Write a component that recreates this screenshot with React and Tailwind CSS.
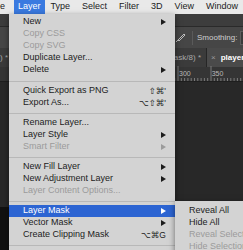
import React from "react";

const font = { fontFamily: '"Liberation Sans", "DejaVu Sans", sans-serif' };

const items = [
  { label: "New", arrow: true },
  { label: "Copy CSS", disabled: true },
  { label: "Copy SVG", disabled: true },
  { label: "Duplicate Layer..." },
  { label: "Delete", arrow: true },
  "sep-first",
  { label: "Quick Export as PNG", shortcut: "⇧⌘'" },
  { label: "Export As...", shortcut: "⌥⇧⌘'" },
  "sep",
  { label: "Rename Layer..." },
  { label: "Layer Style", arrow: true },
  { label: "Smart Filter", arrow: true, disabled: true },
  "sep",
  { label: "New Fill Layer", arrow: true },
  { label: "New Adjustment Layer", arrow: true },
  { label: "Layer Content Options...", disabled: true },
  "sep",
  { label: "Layer Mask", arrow: true, active: true },
  { label: "Vector Mask", arrow: true },
  { label: "Create Clipping Mask", shortcut: "⌥⌘G" },
  "sep",
  { label: "Smart Objects", arrow: true },
  { label: "Video Layers", arrow: true },
];

const subItems = [
  { label: "Reveal All" },
  { label: "Hide All" },
  { label: "Reveal Selection", disabled: true },
  { label: "Hide Selection", disabled: true },
];

const Arrow = () => (
  <svg width="5" height="6" viewBox="0 0 5 6">
    <polygon points="0,0 5,3 0,6" fill="currentColor" />
  </svg>
);

const MenuRow = ({ item }) => {
  let color = "text-[#1c1c1c]";
  if (item.disabled) color = "text-[#9b9b9b]";
  if (item.active) color = "text-white bg-[#2c64d2]";
  return (
    <div className={`flex h-3 items-center justify-between pl-[14px] pr-[9px] ${color}`}>
      <span className="whitespace-nowrap">{item.label}</span>
      {item.arrow && <Arrow />}
      {item.shortcut && <span className="whitespace-nowrap text-[8.5px]">{item.shortcut}</span>}
    </div>
  );
};

const Separator = ({ first }) => (
  <div className={first ? "pt-[5px] pb-[3px]" : "pt-1 pb-[3px]"}>
    <div className="h-px bg-[#b8b8b8]" />
  </div>
);

export default function App() {
  return (
    <div className="relative flex h-[250px] w-[243px] flex-col overflow-hidden bg-[#282828]" style={font}>
      {/* macOS menu bar */}
      <div className="flex h-[14px] items-center bg-[#e9e9e9] text-[9px] text-[#222]">
        <div className="flex w-[14px] shrink-0 justify-end overflow-hidden">
          <span className="whitespace-nowrap pr-[9px]">Image</span>
        </div>
        <span className="flex h-full items-center bg-[#3a7ae0] px-[4px] text-white">Layer</span>
        <span className="px-[6px]">Type</span>
        <span className="px-[6px]">Select</span>
        <span className="px-[6px]">Filter</span>
        <span className="px-[6px]">3D</span>
        <span className="px-[6px]">View</span>
        <span className="px-[6px]">Window</span>
      </div>

      {/* app title strip */}
      <div className="h-[13px] border-b border-[#2a2a2a] bg-[#3d3d3d]" />

      {/* options bar */}
      <div className="flex h-[21px] items-center bg-[#464646] pl-[175px] text-[8px] text-[#cfcfcf]">
        <svg width="11" height="10" viewBox="0 0 11 10" className="mr-[6px] shrink-0">
          <path d="M1 9 L4 6 M3 7 L9 1 L10 2 L4 8 Z" stroke="#bdbdbd" strokeWidth="1" fill="none" />
        </svg>
        <div className="mr-[4px] h-[14px] w-px shrink-0 bg-[#5a5a5a]" />
        <span className="whitespace-nowrap">Smoothing:</span>
        <span className="ml-[3px] whitespace-nowrap border border-[#5c5c5c] bg-[#3a3a3a] px-[2px]">0%</span>
      </div>

      {/* document tabs */}
      <div className="flex h-[19px] items-stretch bg-[#303030] text-[8px]">
        <div className="flex w-[10px] shrink-0 items-center justify-end overflow-hidden border-r border-[#262626] bg-[#3b3b3b] text-[#a9a9a9]">
          <span className="whitespace-nowrap pr-[1px]">8) *</span>
        </div>
        <div className="flex w-[197px] shrink-0 items-center justify-end overflow-hidden border-r border-[#262626] bg-[#3b3b3b] pr-[5px] text-[#a9a9a9]">
          <span className="whitespace-nowrap">Layer 1, Layer Mask/8) *</span>
        </div>
        <div className="flex flex-1 items-center overflow-hidden bg-[#4a4a4a] pl-[4px]">
          <span className="mr-[5px] text-[#9a9a9a]">×</span>
          <span className="whitespace-nowrap font-bold text-white">player.psd</span>
        </div>
      </div>

      {/* ruler */}
      <div className="relative flex h-[15px] items-start border-b border-[#1e1e1e] bg-[#353535] text-[7px] text-[#b9b9b9]">
        <svg className="absolute bottom-0 left-0" width="243" height="15">
          {Array.from({ length: 74 }).map((_, i) => {
            const x = 178 - 33 * 5 + i * 3.3;
            const major = i % 10 === 0;
            return (
              <line key={i} x1={x} x2={x} y1={major ? 0 : 12} y2={15} stroke="#7a7a7a" strokeWidth="1" />
            );
          })}
        </svg>
        <span className="relative ml-[179px] mt-[2px]">300</span>
        <span className="relative ml-[21px] mt-[2px]">350</span>
      </div>

      {/* canvas */}
      <div className="flex flex-1 flex-col">
        <div className="flex-1 bg-[#282828]" />
        <div className="h-[43px] bg-[#111]" />
      </div>

      {/* Layer menu */}
      <div className="absolute left-[9px] top-[14px] w-[166px] bg-[#d3d3d3] pt-[2px] text-[9px] shadow-[0_2px_6px_rgba(0,0,0,0.5)]">
        {items.map((item, i) =>
          typeof item === "string" ? (
            <Separator key={i} first={item === "sep-first"} />
          ) : (
            <MenuRow key={i} item={item} />
          )
        )}
      </div>

      {/* Layer Mask submenu */}
      <div className="absolute left-[175px] top-[201px] w-[110px] bg-[#d3d3d3] pt-[4px] pb-1 text-[9px] shadow-[0_2px_6px_rgba(0,0,0,0.5)]">
        {subItems.map((item, i) => (
          <MenuRow key={i} item={item} />
        ))}
      </div>
    </div>
  );
}
